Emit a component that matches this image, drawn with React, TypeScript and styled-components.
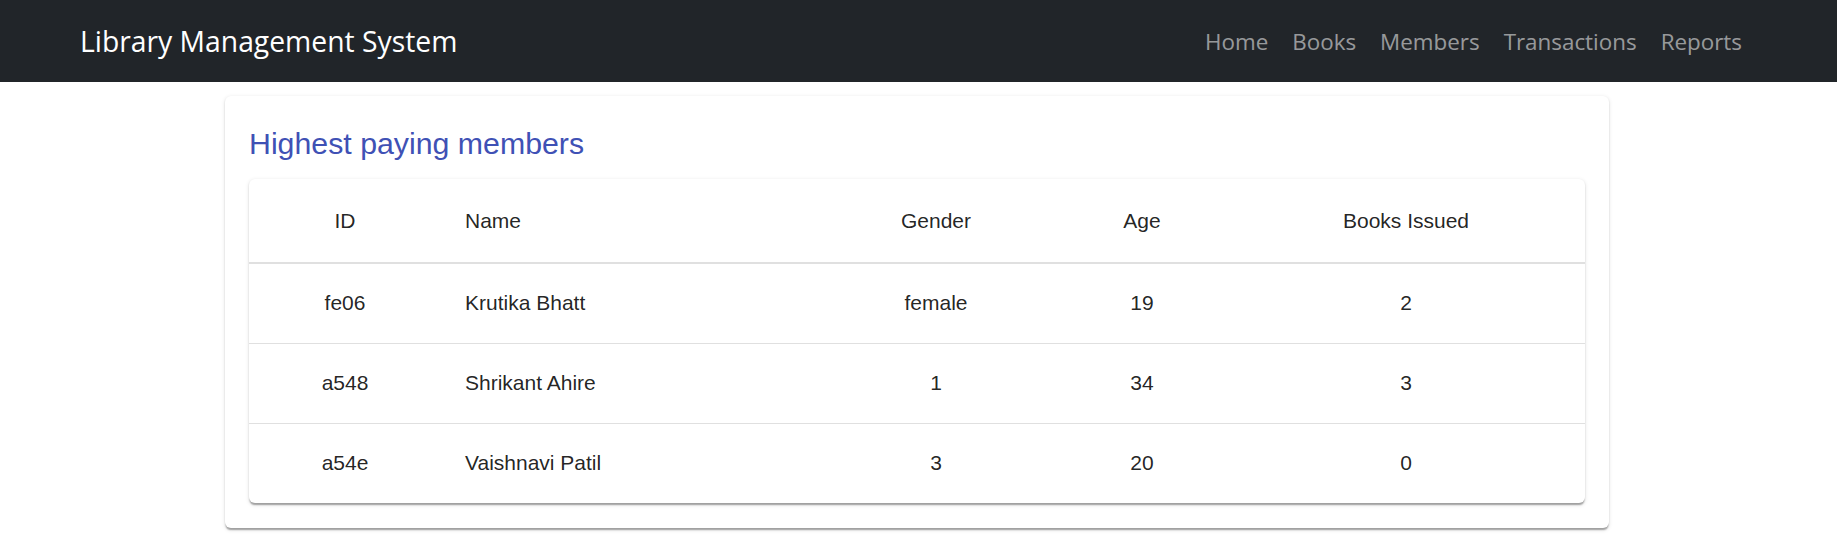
import React from 'react';
import styled, { createGlobalStyle } from 'styled-components';

const GlobalStyle = createGlobalStyle`
  html, body {
    margin: 0;
    padding: 0;
    background: #ffffff;
  }
  body {
    font-family: 'Liberation Sans', Arial, sans-serif;
  }
`;

type Member = {
  id: string;
  name: string;
  gender: string;
  age: number;
  booksIssued: number;
};

const members: Member[] = [
  { id: 'fe06', name: 'Krutika Bhatt', gender: 'female', age: 19, booksIssued: 2 },
  { id: 'a548', name: 'Shrikant Ahire', gender: '1', age: 34, booksIssued: 3 },
  { id: 'a54e', name: 'Vaishnavi Patil', gender: '3', age: 20, booksIssued: 0 },
];

const navLinks = ['Home', 'Books', 'Members', 'Transactions', 'Reports'];

const App = () => {
  return (
    <>
      <GlobalStyle />
      <Navbar>
        <Brand href="#">Library Management System</Brand>
        <NavList>
          {navLinks.map((link) => (
            <li key={link}>
              <NavLink href="#">{link}</NavLink>
            </li>
          ))}
        </NavList>
      </Navbar>
      <Main>
        <Card>
          <CardTitle>Highest paying members</CardTitle>
          <TablePaper>
            <Table>
              <colgroup>
                <col style={{ width: 192 }} />
                <col style={{ width: 374 }} />
                <col style={{ width: 242 }} />
                <col style={{ width: 170 }} />
                <col style={{ width: 358 }} />
              </colgroup>
              <thead>
                <tr>
                  <HeadCell $align="center">ID</HeadCell>
                  <HeadCell $align="left">Name</HeadCell>
                  <HeadCell $align="center">Gender</HeadCell>
                  <HeadCell $align="center">Age</HeadCell>
                  <HeadCell $align="center">Books Issued</HeadCell>
                </tr>
              </thead>
              <tbody>
                {members.map((m) => (
                  <BodyRow key={m.id}>
                    <Cell $align="center">{m.id}</Cell>
                    <Cell $align="left">{m.name}</Cell>
                    <Cell $align="center">{m.gender}</Cell>
                    <Cell $align="center">{m.age}</Cell>
                    <Cell $align="center">{m.booksIssued}</Cell>
                  </BodyRow>
                ))}
              </tbody>
            </Table>
          </TablePaper>
        </Card>
      </Main>
    </>
  );
};

export default App;

const Navbar = styled.nav`
  height: 82px;
  background-color: #212529;
  display: flex;
  align-items: center;
  justify-content: space-between;
  padding: 0 83px 0 80px;
  box-sizing: border-box;
`;

const Brand = styled.a`
  font-family: 'Open Sans', 'Noto Sans', sans-serif;
  font-size: 28.3px;
  color: #ffffff;
  text-decoration: none;
  white-space: nowrap;
`;

const NavList = styled.ul`
  display: flex;
  list-style: none;
  margin: 0;
  padding: 0;
`;

const NavLink = styled.a`
  display: block;
  padding: 12px;
  font-family: 'Open Sans', 'Noto Sans', sans-serif;
  font-size: 22.4px;
  color: rgba(255, 255, 255, 0.55);
  text-decoration: none;
`;

const Main = styled.main`
  display: flex;
  justify-content: center;
  padding: 14px 3px 24px 0;
`;

const Card = styled.section`
  width: 1384px;
  padding: 24px 24px 25px;
  box-sizing: border-box;
  background: #fff;
  border-radius: 6px;
  box-shadow: 0px 3px 1.5px -1.5px rgba(0, 0, 0, 0.2),
    0px 1.5px 1.5px 0px rgba(0, 0, 0, 0.14),
    0px 1.5px 4.5px 0px rgba(0, 0, 0, 0.12);
`;

const CardTitle = styled.h2`
  margin: 0 0 11px;
  font-size: 30.3px;
  line-height: 48px;
  font-weight: 400;
  color: #3f51b5;
`;

const TablePaper = styled.div`
  border-radius: 6px;
  overflow: hidden;
  background: #fff;
  box-shadow: 0px 3px 1.5px -1.5px rgba(0, 0, 0, 0.2),
    0px 1.5px 1.5px 0px rgba(0, 0, 0, 0.14),
    0px 1.5px 4.5px 0px rgba(0, 0, 0, 0.12);
`;

const Table = styled.table`
  width: 100%;
  border-collapse: collapse;
  table-layout: fixed;
`;

const HeadCell = styled.th<{ $align: 'left' | 'center' }>`
  height: 84px;
  padding: 0 24px;
  box-sizing: border-box;
  text-align: ${(p) => p.$align};
  font-size: 21px;
  font-weight: 400;
  color: rgba(0, 0, 0, 0.87);
  border-bottom: 2px solid #e0e0e0;
`;

const BodyRow = styled.tr`
  &:last-child td {
    border-bottom: none;
  }
`;

const Cell = styled.td<{ $align: 'left' | 'center' }>`
  height: 80px;
  padding: 0 24px;
  box-sizing: border-box;
  text-align: ${(p) => p.$align};
  font-size: 21px;
  color: rgba(0, 0, 0, 0.87);
  border-bottom: 1.5px solid #e0e0e0;
`;
